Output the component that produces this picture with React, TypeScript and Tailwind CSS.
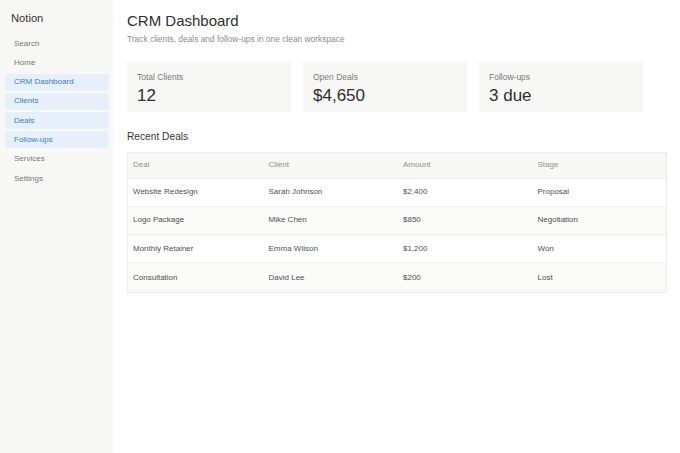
import React from "react";

const nav = [
  { label: "Search", active: false },
  { label: "Home", active: false },
  { label: "CRM Dashboard", active: true },
  { label: "Clients", active: true },
  { label: "Deals", active: true },
  { label: "Follow-ups", active: true },
  { label: "Services", active: false },
  { label: "Settings", active: false },
];

const stats = [
  { label: "Total Clients", value: "12" },
  { label: "Open Deals", value: "$4,650" },
  { label: "Follow-ups", value: "3 due" },
];

const deals = [
  ["Website Redesign", "Sarah Johnson", "$2,400", "Proposal"],
  ["Logo Package", "Mike Chen", "$850", "Negotiation"],
  ["Monthly Retainer", "Emma Wilson", "$1,200", "Won"],
  ["Consultation", "David Lee", "$200", "Lost"],
];

export default function App() {
  return (
    <div
      className="flex w-[680px] h-[453px] bg-white text-[#37352f]"
      style={{ fontFamily: '"Liberation Sans", Arial, sans-serif' }}
    >
      <aside className="w-[113px] shrink-0 bg-[#f7f7f5] pt-[10px] pl-[5px] pr-[4px]">
        <div className="pl-[6px] text-[11.2px] leading-[16px] text-[#37352f]">Notion</div>
        <nav className="mt-[9px] flex flex-col gap-[2.3px]">
          {nav.map((n) => (
            <div
              key={n.label}
              className={
                n.active
                  ? "h-[17px] flex items-center pl-[9px] text-[8px] bg-[#e7f0fa] text-[#3b7dc4] rounded-[2px]"
                  : "h-[17px] flex items-center pl-[9px] text-[8px] text-[#777]"
              }
            >
              {n.label}
            </div>
          ))}
        </nav>
      </aside>
      <main className="flex-1 pl-[14px] pr-[13px] pt-[10px]">
        <h1 className="text-[15px] leading-[22px] text-[#2f2f2f]">CRM Dashboard</h1>
        <p className="mt-[1px] text-[8.4px] leading-[12px] text-[#8a8a8a]">
          Track clients, deals and follow-ups in one clean workspace
        </p>
        <div className="mt-[17px] flex gap-[12px]">
          {stats.map((s) => (
            <div key={s.label} className="w-[164px] h-[50px] bg-[#f7f7f5] pl-[10px] pt-[10px]">
              <div className="text-[8.5px] leading-[11px] text-[#7a7a7a]">{s.label}</div>
              <div className="mt-[2px] text-[17px] leading-[22px] text-[#2f2f2f]">{s.value}</div>
            </div>
          ))}
        </div>
        <h2 className="mt-[18px] text-[10.2px] leading-[14px] text-[#37352f]">Recent Deals</h2>
        <div className="mt-[8px] border border-[#ededeb]">
          <div className="grid grid-cols-4 h-[25.5px] items-center bg-[#f7f7f5] border-b border-[#ededeb] text-[8px] text-[#8f8f8f]">
            <div className="pl-[5px]">Deal</div>
            <div className="pl-[6px]">Client</div>
            <div className="pl-[6px]">Amount</div>
            <div className="pl-[6px]">Stage</div>
          </div>
          {deals.map((r, i) => (
            <div
              key={r[0]}
              className={
                "grid grid-cols-4 h-[28.3px] items-center text-[8px] text-[#505050] " +
                (i % 2 === 1 ? "bg-[#fafaf9] " : "bg-white ") +
                (i < deals.length - 1 ? "border-b border-[#f0f0ee]" : "")
              }
            >
              <div className="pl-[5px]">{r[0]}</div>
              <div className="pl-[6px]">{r[1]}</div>
              <div className="pl-[6px]">{r[2]}</div>
              <div className="pl-[6px]">{r[3]}</div>
            </div>
          ))}
        </div>
      </main>
    </div>
  );
}
